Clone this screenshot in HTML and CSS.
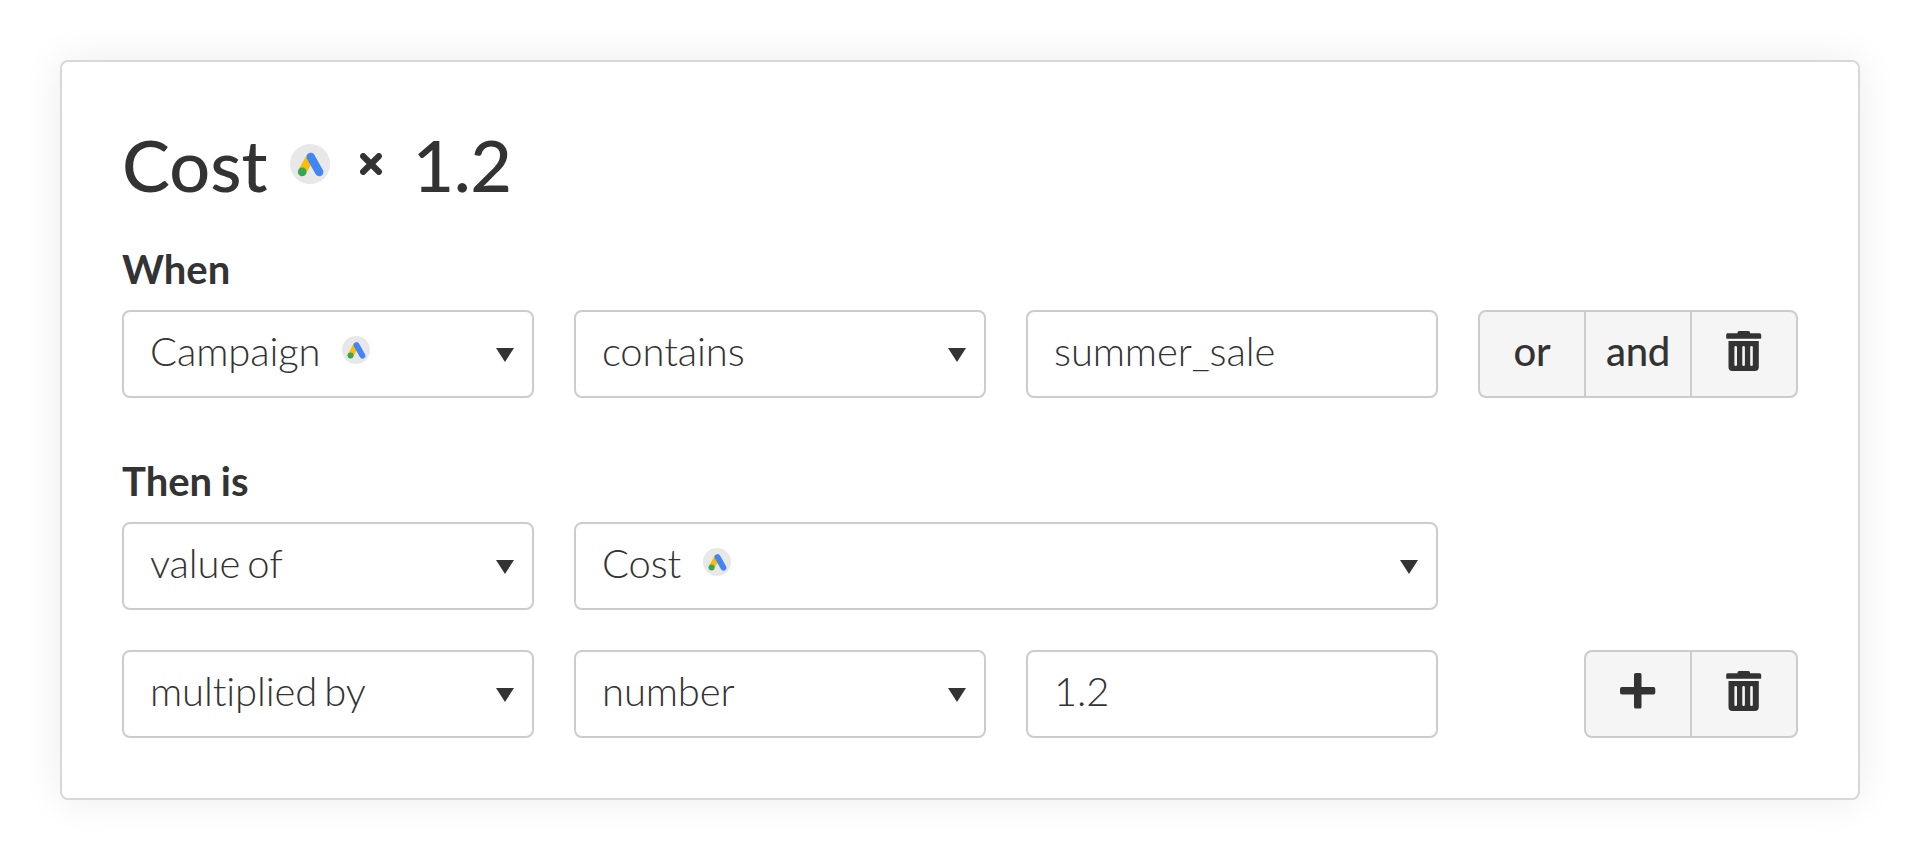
FILE: index.html
```html
<!DOCTYPE html>
<html lang="en">
<head>
<meta charset="utf-8">
<title>Cost rule</title>
<link rel="stylesheet" href="styles.css">
</head>
<body>
<svg class="sprite" aria-hidden="true">
  <symbol id="ads" viewBox="0 0 40 40">
    <circle cx="20" cy="20" r="20" fill="#e8e8e8"/>
    <path d="M20.2 13.2 12.2 27.7" stroke="#fbbc04" stroke-width="8.4" fill="none"/>
    <path d="M20.7 12.9 29.2 28" stroke="#4285f4" stroke-width="8.4" stroke-linecap="round" fill="none"/>
    <circle cx="12.2" cy="27.9" r="4.3" fill="#34a853"/>
  </symbol>
  <symbol id="trash" viewBox="0 0 36 40">
    <path fill="#333" d="M1.500 2.300H11.500V1.500Q11.500 0 13 0H22.500Q24 0 24 1.500V2.300H33.500Q35.200 2.300 35.200 4V7Q35.200 7.700 34.500 7.700H.9Q.2 7.700 .2 7V4Q.2 2.300 1.500 2.300Z"/>
    <path fill="#333" fill-rule="evenodd" d="M2.500 10H32.800V36Q32.800 40 28.800 40H6.500Q2.500 40 2.500 36ZM9.700 15Q8.400 15 8.400 16.300V33.700Q8.400 35 9.700 35T11 33.700V16.300Q11 15 9.700 15ZM17.600 15Q16.300 15 16.300 16.300V33.700Q16.300 35 17.600 35T18.900 33.700V16.300Q18.900 15 17.600 15ZM25.500 15Q24.200 15 24.200 16.300V33.700Q24.200 35 25.500 35T26.800 33.700V16.300Q26.800 15 25.500 15Z"/>
  </symbol>
</svg>
<main class="card">
  <h1 class="title">
    <span>Cost</span>
    <svg class="title-ads"><use href="#ads"/></svg>
    <svg class="times" viewBox="0 0 22 22"><path d="M3.200 3.200 18.800 18.800M18.800 3.200 3.200 18.800" stroke="#333" stroke-width="6.200" stroke-linecap="round"/></svg>
    <span class="factor">1.2</span>
  </h1>

  <h2 class="label">When</h2>
  <div class="row">
    <div class="field select"><span>Campaign</span><svg class="ads"><use href="#ads"/></svg></div>
    <div class="field select"><span>contains</span></div>
    <div class="field"><span>summer_sale</span></div>
    <div class="actions">
      <div class="action">or</div>
      <div class="action">and</div>
      <div class="action"><svg class="trash"><use href="#trash"/></svg></div>
    </div>
  </div>

  <h2 class="label label-then">Then is</h2>
  <div class="row">
    <div class="field select"><span>value of</span></div>
    <div class="field select wide"><span>Cost</span><svg class="ads"><use href="#ads"/></svg></div>
  </div>
  <div class="row row-next">
    <div class="field select"><span>multiplied by</span></div>
    <div class="field select"><span>number</span></div>
    <div class="field"><span>1.2</span></div>
    <div class="actions">
      <div class="action"><svg class="plus" viewBox="0 0 36 36"><path fill="#333" d="M16 0H20Q21.500 0 21.500 1.500V14H33.500Q35.300 14 35.300 16V19.500Q35.300 21.500 33.500 21.500H21.500V34Q21.500 35.600 20 35.600H16Q14 35.600 14 34V21.500H2Q0 21.500 0 19.500V16Q0 14 2 14H14V1.500Q14 0 16 0Z"/></svg></div>
      <div class="action"><svg class="trash"><use href="#trash"/></svg></div>
    </div>
  </div>
</main>
</body>
</html>
```
FILE: styles.css
```css
* {
  box-sizing: border-box;
}

body {
  margin: 0;
  padding: 60px;
  background: #fff;
  color: #333;
  font-family: Lato, "Liberation Sans", sans-serif;
  font-size: 40px;
  font-variant-ligatures: none;
  line-height: 48px;
}

.sprite {
  display: none;
}

.card {
  height: 740px;
  padding: 60px;
  border: 2px solid #d8d8d8;
  border-radius: 8px;
  background: #fff;
  box-shadow: 0 0 40px rgba(0, 0, 0, 0.08);
}

.title {
  display: flex;
  align-items: center;
  height: 84px;
  margin: 0;
  font-size: 72px;
  font-weight: 500;
  line-height: 86px;
}

.title-ads {
  width: 40px;
  height: 40px;
  margin: 0 30px 0 22px;
}

.times {
  width: 22px;
  height: 22px;
  margin: 0 31px 0 0;
}

.factor {
  letter-spacing: -0.6px;
}

.label {
  margin: 39px 0 17px;
  font-size: 40px;
  font-weight: 700;
  line-height: 48px;
  word-spacing: -1px;
}

.label-then {
  margin-top: 59px;
}

.row {
  display: grid;
  grid-template-columns: repeat(3, 412px) 1fr;
  column-gap: 40px;
}

.row-next {
  margin-top: 40px;
}

.field {
  display: flex;
  align-items: center;
  height: 88px;
  padding: 0 18px 6px 26px;
  border: 2px solid #ccc;
  border-radius: 8px;
  font-weight: 300;
  letter-spacing: -0.12px;
  word-spacing: -3.5px;
}

.wide {
  grid-column: span 2;
}

.select::after {
  content: "";
  margin: 7px 0 0 auto;
  border: solid transparent;
  border-width: 14px 9px 0;
  border-top-color: #333;
}

.ads {
  width: 28px;
  height: 28px;
  margin: 0 0 2px 22px;
}

.actions {
  display: flex;
  justify-self: end;
  height: 88px;
  border: 2px solid #ccc;
  border-radius: 8px;
  background: #f5f5f5;
  font-weight: 500;
  letter-spacing: -0.3px;
}

.action {
  display: flex;
  align-items: center;
  justify-content: center;
  width: 106px;
  padding-bottom: 6px;
}

.action:first-child {
  width: 104px;
}

.action + .action {
  border-left: 2px solid #ccc;
}

.trash {
  width: 36px;
  height: 40px;
}

.plus {
  width: 36px;
  height: 36px;
}
```
